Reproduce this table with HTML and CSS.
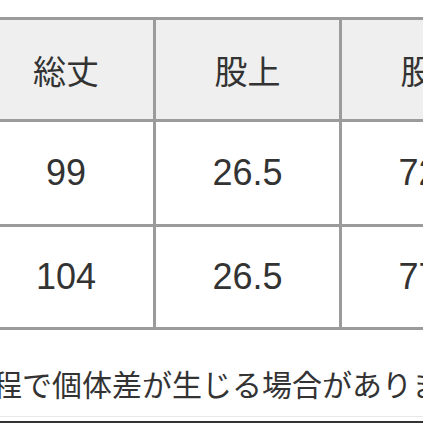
FILE: index.html
```html
<!DOCTYPE html>
<html lang="ja">
<head>
<meta charset="utf-8">
<link rel="stylesheet" href="styles.css">
</head>
<body>
<div class="page">
  <div class="size-table">
    <div class="cell head">総丈</div>
    <div class="cell head">股上</div>
    <div class="cell head">股下</div>
    <div class="cell num r1">99</div>
    <div class="cell num r1">26.5</div>
    <div class="cell num r1">72.5</div>
    <div class="cell num">104</div>
    <div class="cell num">26.5</div>
    <div class="cell num">77.5</div>
  </div>
  <p class="note">程で個体差が生じる場合がありま</p>
  <div class="divider"></div>
  <div class="bar"></div>
</div>
</body>
</html>
```
FILE: styles.css
```css
html, body {
  margin: 0;
  padding: 0;
  background: #ffffff;
}
.page {
  width: 423px;
  height: 423px;
  overflow: hidden;
  padding-top: 17px;
  box-sizing: border-box;
  font-family: "Liberation Sans", "Noto Sans CJK JP", sans-serif;
  color: #333333;
}
.size-table {
  display: grid;
  grid-template-columns: 174px 183px 183px;
  grid-template-rows: 99px 102px 100px;
  gap: 3px;
  padding: 3px;
  background: #9b9b9b;
  width: max-content;
  margin-left: -24px;
}
.cell {
  display: flex;
  align-items: center;
  justify-content: center;
  background: #ffffff;
  white-space: nowrap;
}
.head {
  background: #efefef;
  font-family: "Noto Sans CJK JP", sans-serif;
  font-size: 33px;
}
.num {
  font-size: 36px;
}
.note {
  margin: 38px 0 0 0;
  font-family: "Noto Sans CJK JP", sans-serif;
  font-size: 30px;
  line-height: 30px;
  white-space: nowrap;
  text-indent: -8px;
}
.divider {
  margin-top: 18px;
  height: 1px;
  background: #e8e8e8;
}
.bar {
  margin-top: 4px;
  height: 3px;
  background: #333333;
}
```
